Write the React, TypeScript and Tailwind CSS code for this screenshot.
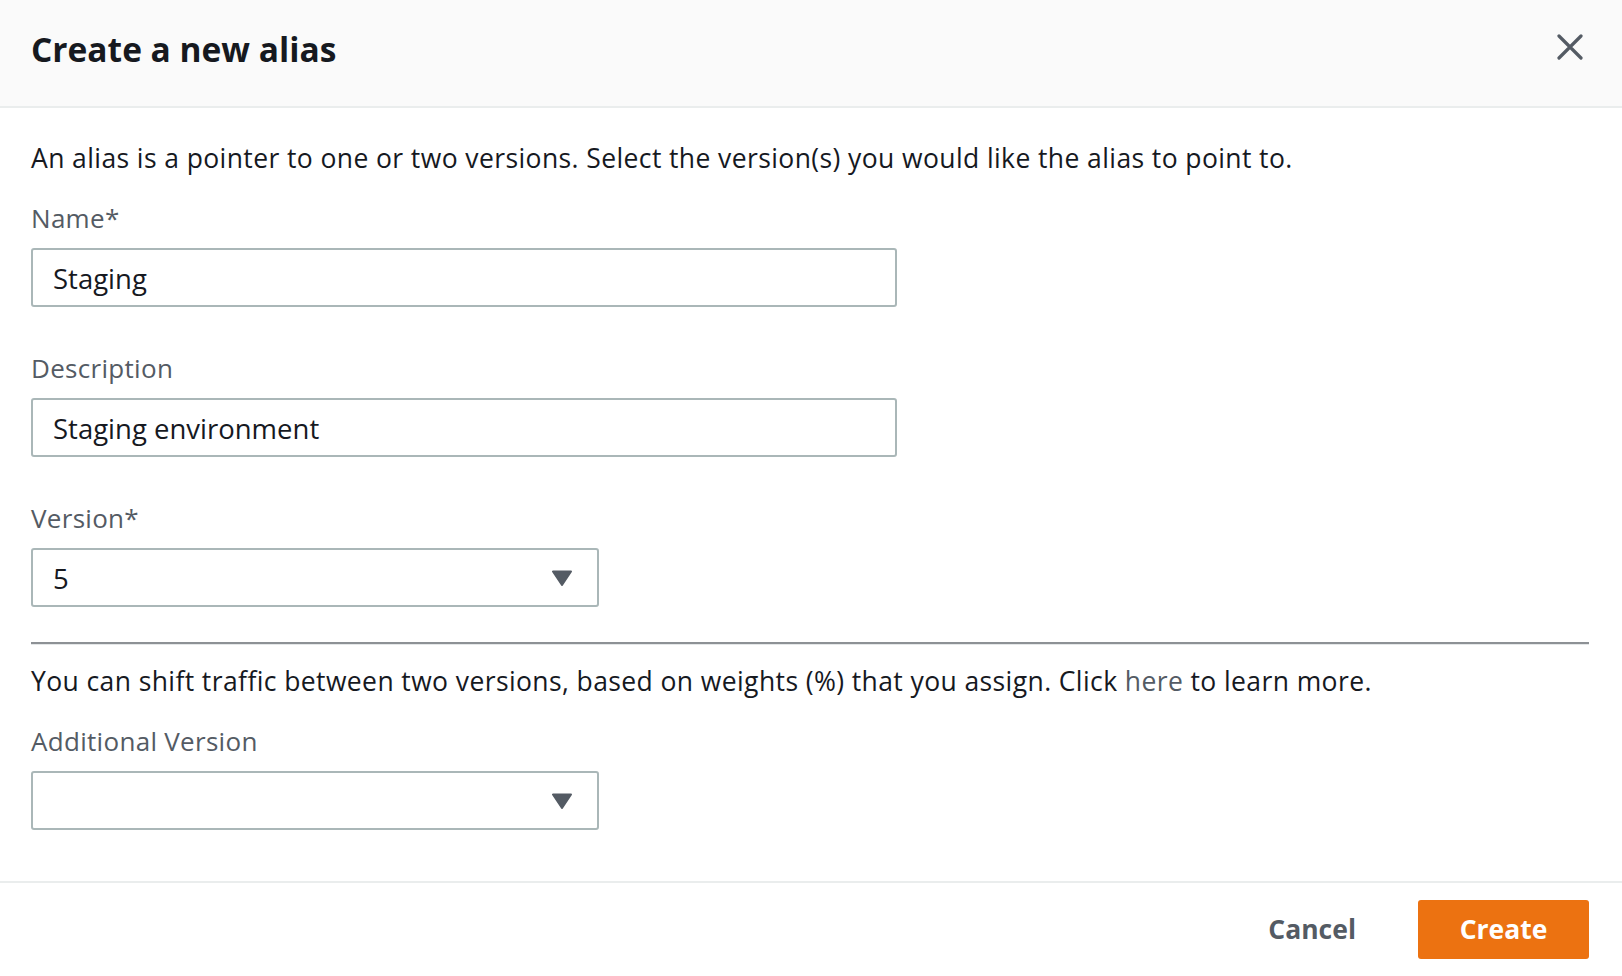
import React from "react";

const font = { fontFamily: "'Open Sans', Lato, sans-serif" };

function Field({ label, value }: { label: string; value: string }) {
  return (
    <div>
      <label className="block text-[26px] leading-[36px] tracking-[0.3px] text-[#545b64]">{label}</label>
      <div className="mt-[12px] flex h-[59px] w-[866px] items-center rounded-[3px] border-2 border-[#aab7b8] px-[20px] pt-[3px] text-[27.5px] text-[#16191f]">
        {value}
      </div>
    </div>
  );
}

function SelectBox({ label, value }: { label: string; value: string }) {
  return (
    <div>
      <label className="block text-[26px] leading-[36px] tracking-[0.3px] text-[#545b64]">{label}</label>
      <div className="mt-[12px] flex h-[59px] w-[568px] items-center justify-between rounded-[3px] border-2 border-[#aab7b8] pl-[20px] pr-[25px] text-[27.5px] text-[#16191f]">
        <span className="pt-[2px]">{value}</span>
        <svg width="20" height="16" viewBox="0 0 20 16" className="text-[#545b64]">
          <path d="M1 1.5h18L10 15z" fill="currentColor" stroke="currentColor" strokeWidth="2" strokeLinejoin="round" />
        </svg>
      </div>
    </div>
  );
}

export default function App() {
  return (
    <div className="flex min-h-[976px] w-full flex-col bg-white text-[#16191f]" style={font}>
      {/* header */}
      <div className="flex h-[108px] items-center justify-between border-b-2 border-[#eaeded] bg-[#fafafa] pb-[8px] pl-[31px] pr-[39px]">
        <h1 className="text-[33.5px] font-bold leading-[44px] text-[#16191f]">Create a new alias</h1>
        <svg width="26" height="26" viewBox="0 0 26 26" className="mb-[4px] text-[#545b64]">
          <path d="M2 2l22 22M24 2L2 24" stroke="currentColor" strokeWidth="3.2" strokeLinecap="round" />
        </svg>
      </div>

      {/* body */}
      <div className="flex flex-col pb-[51px] pl-[31px] pr-[33px] pt-[32px]">
        <p className="text-[26.5px] leading-[36px] tracking-[0.4px]">
          An alias is a pointer to one or two versions. Select the version(s) you would like the alias to point to.
        </p>
        <div className="mt-[24px] flex flex-col gap-[43px]">
          <Field label="Name*" value="Staging" />
          <Field label="Description" value="Staging environment" />
          <SelectBox label="Version*" value="5" />
        </div>
        <div className="mt-[35px]">
          <div className="h-[2px] bg-[#8d9195]" />
          <div className="h-[1px] bg-[#e4e7e8]" />
        </div>
        <p className="mt-[18px] text-[26.5px] leading-[36px] tracking-[0.4px]">
          You can shift traffic between two versions, based on weights (%) that you assign. Click{" "}
          <a className="text-[#545b64]">here</a> to learn more.
        </p>
        <div className="mt-[24px]">
          <SelectBox label="Additional Version" value="" />
        </div>
      </div>

      {/* footer */}
      <div className="flex items-center justify-end gap-[20px] border-t-2 border-[#eaeded] pb-[17px] pr-[33px] pt-[17px]">
        <button className="h-[59px] px-[42px] text-[26.5px] font-bold text-[#545b64]">Cancel</button>
        <button className="h-[59px] w-[171px] rounded-[3px] bg-[#ec7211] text-[26.5px] font-bold text-white">
          Create
        </button>
      </div>
    </div>
  );
}
